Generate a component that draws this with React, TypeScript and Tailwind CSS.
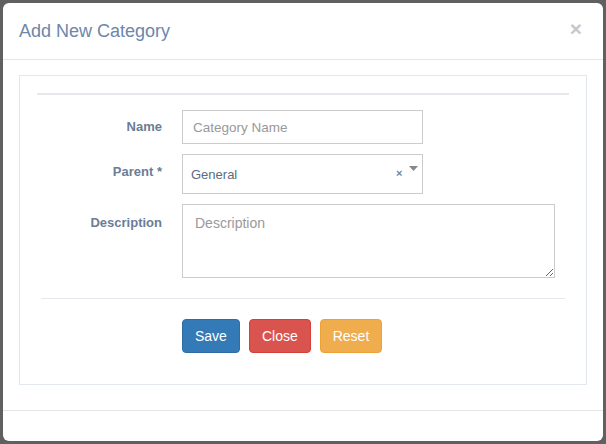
import React from 'react';

const labelCls = "w-[125px] shrink-0 text-right text-[13px] font-bold text-[#6b7d95]";

export default function App() {
  return (
    <div className="w-[606px] h-[444px] bg-[#606060] p-[3px] font-['Liberation_Sans',Arial,sans-serif]">
      <div className="w-[600px] h-[438px] bg-white rounded-[6px] flex flex-col overflow-hidden">
        {/* Header */}
        <div className="h-[57px] shrink-0 border-b border-[#e5e5e5] px-4 flex items-center justify-between">
          <h4 className="text-[18px] text-[#6c87aa] leading-none -mt-[1px]">Add New Category</h4>
          <span className="mr-[5px] text-[21px] font-bold text-[#c8c8c8] leading-none -mt-[5px]">×</span>
        </div>

        {/* Body */}
        <div className="px-4 pt-[15px] pb-[25px]">
          <div className="h-[310px] border border-[#e3e8ee] px-[17px] pt-[17px]">
            <div className="border-t-2 border-[#e5e9ee]" />

            <div className="mt-[15px] flex flex-col gap-[10px]">
              {/* Name */}
              <div className="flex items-center">
                <label className={labelCls}>Name</label>
                <input
                  placeholder="Category Name"
                  className="ml-5 w-[241px] h-[34px] border border-[#cccccc] px-[10px] text-[13.5px] text-[#555] placeholder:text-[#999] outline-none"
                />
              </div>

              {/* Parent */}
              <div className="flex items-center">
                <label className={`${labelCls} -mt-[4px]`}>Parent *</label>
                <div className="ml-5 w-[241px] h-[40px] border border-[#cccccc] relative flex items-center px-2 text-[13px] text-[#5b6b80]">
                  <span className="mt-[1px]">General</span>
                  <span className="absolute left-[213px] top-[13px] text-[11px] font-bold text-[#7185a4] leading-none">×</span>
                  <svg className="absolute left-[226px] top-[11px]" width="9" height="5" viewBox="0 0 9 5">
                    <path d="M0 0h9L4.5 5z" fill="#888" />
                  </svg>
                </div>
              </div>

              {/* Description */}
              <div className="flex items-start">
                <label className={`${labelCls} pt-[9px]`}>Description</label>
                <textarea
                  placeholder="Description"
                  className="ml-5 w-[373px] h-[74px] border border-[#cccccc] px-[12px] py-[8px] text-[14px] text-[#555] placeholder:text-[#999] outline-none"
                />
              </div>
            </div>

            <div className="mt-[20px] mx-[4px] border-t border-[#e5e9ee]" />

            <div className="mt-[20px] ml-[145px] flex gap-[9px]">
              <button className="h-[34px] px-[12px] rounded-[4px] bg-[#337ab7] border border-[#2e6da4] text-white text-[14px]">Save</button>
              <button className="h-[34px] px-[12px] rounded-[4px] bg-[#d9534f] border border-[#d43f3a] text-white text-[14px]">Close</button>
              <button className="h-[34px] px-[12px] rounded-[4px] bg-[#f0ad4e] border border-[#eea236] text-white text-[14px]">Reset</button>
            </div>
          </div>
        </div>

        {/* Footer */}
        <div className="flex-1 border-t border-[#e5e5e5]" />
      </div>
    </div>
  );
}
